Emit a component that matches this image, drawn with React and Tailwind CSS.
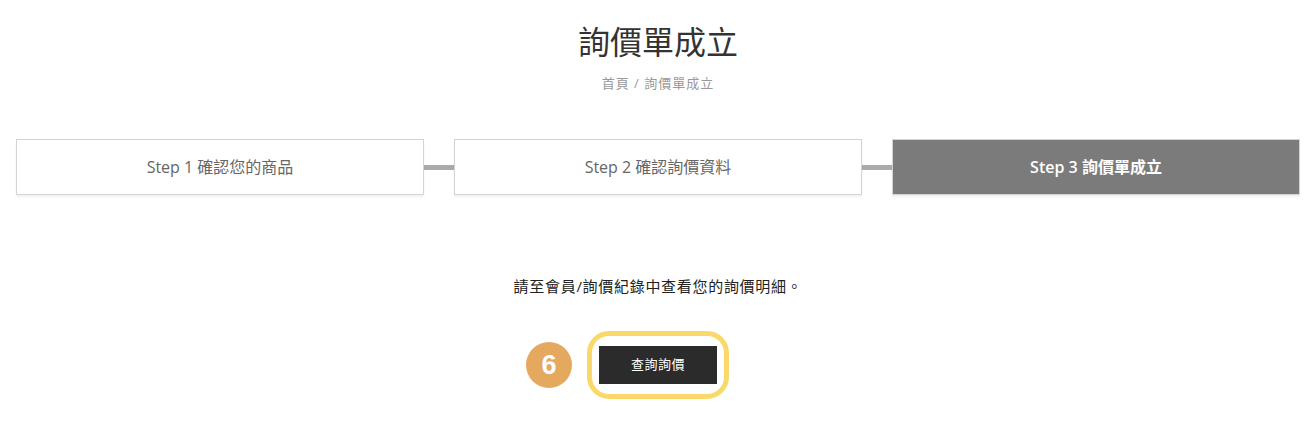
export default function App() {
  const cjk = { fontFamily: '"Open Sans", "Noto Sans CJK TC", sans-serif' };
  return (
    <div className="w-[1316px] h-[445px] bg-white" style={cjk}>
      <div className="flex flex-col items-center pt-[22px]">
        <h1 className="text-[32px] leading-[40px] text-[#333] font-normal">詢價單成立</h1>
        <div className="mt-[12px] text-[13px] leading-[18px] text-[#999] tracking-[1px]">首頁 / 詢價單成立</div>
      </div>
      <div className="flex items-center px-[16px] mt-[47px]">
        <div className="flex-1 h-[56px] border border-[#d4d4d4] bg-white flex items-center justify-center text-[16px] text-[#666] shadow-[0_2px_2px_rgba(0,0,0,0.06)]">
          Step 1 確認您的商品
        </div>
        <div className="w-[30px] h-[5px] bg-[#aaaaaa]" />
        <div className="flex-1 h-[56px] border border-[#d4d4d4] bg-white flex items-center justify-center text-[16px] text-[#666] shadow-[0_2px_2px_rgba(0,0,0,0.06)]">
          Step 2 確認詢價資料
        </div>
        <div className="w-[30px] h-[5px] bg-[#aaaaaa]" />
        <div className="flex-1 h-[56px] border border-[#d4d4d4] bg-[#7b7b7b] flex items-center justify-center text-[16px] text-white font-semibold shadow-[0_2px_2px_rgba(0,0,0,0.06)]">
          Step 3 詢價單成立
        </div>
      </div>
      <div className="flex justify-center mt-[80px] text-[15px] leading-[22px] text-[#222] tracking-[0.7px]">
        請至會員/詢價紀錄中查看您的詢價明細。
      </div>
      <div className="flex justify-center items-center mt-[34px]">
        <div className="w-[46px] h-[46px] rounded-full bg-[#e4a85f] flex items-center justify-center text-white text-[27px] font-bold mr-[15px] -ml-[61px]" style={{ fontFamily: '"Liberation Sans", Arial, sans-serif' }}>
          6
        </div>
        <div className="rounded-[22px] border-[5px] border-[#fad96a] px-[7px] py-[10px]">
          <button className="block w-[118px] h-[38px] bg-[#2b2b2b] text-white text-[13px] tracking-[0.5px]">查詢詢價</button>
        </div>
      </div>
    </div>
  );
}
